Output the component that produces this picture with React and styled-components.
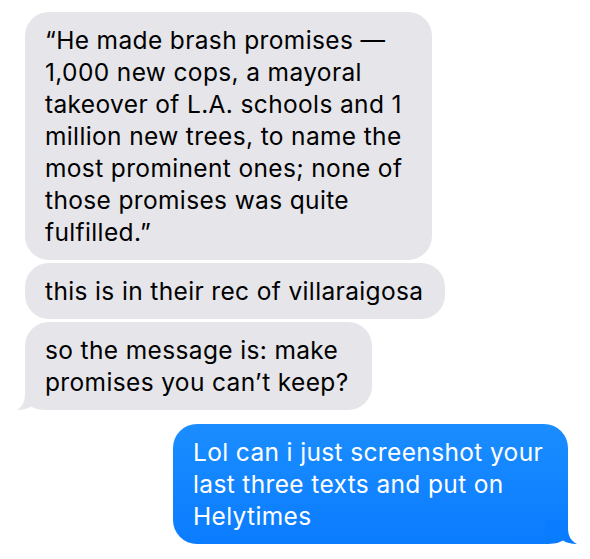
import React from "react";
import styled, { createGlobalStyle } from "styled-components";

const Global = createGlobalStyle`
  html, body { margin: 0; padding: 0; background: #ffffff; }
  body { font-family: Inter, "Noto Sans", sans-serif; -webkit-font-smoothing: antialiased; }
`;

const Thread = styled.div`
  width: 590px;
  height: 559px;
  box-sizing: border-box;
  padding: 12px 0 0 25px;
  display: flex;
  flex-direction: column;
  background: #fff;
  overflow: hidden;
`;

const Group = styled.div`
  display: flex;
  flex-direction: column;
  align-items: ${(p) => (p.$mine ? "flex-end" : "flex-start")};
  gap: 3px;
  margin-top: ${(p) => p.$top || 0}px;
  padding-right: ${(p) => (p.$mine ? 22 : 0)}px;
`;

const Bubble = styled.div`
  position: relative;
  z-index: 0;
  box-sizing: border-box;
  width: ${(p) => p.$w}px;
  padding: 12px 20px;
  border-radius: 24px;
  font-size: 24.5px;
  line-height: 32px;
  letter-spacing: 0.36px;
  white-space: nowrap;
  color: ${(p) => (p.$mine ? "#ffffff" : "#000000")};
  background: ${(p) =>
    p.$mine ? "linear-gradient(180deg, #1b8dff 0%, #0a7cff 100%)" : "#e5e5ea"};
`;

const Tail = styled.svg`
  position: absolute;
  z-index: -1;
  bottom: 0;
  ${(p) => (p.$mine ? "right: -9px;" : "left: -8px;")}
  width: 32px;
  height: 24px;
  overflow: visible;
`;

const GrayTail = () => (
  <Tail viewBox="0 0 32 24">
    <path
      d="M8 0 L8 8 C8 16 5 21 0 24 C6 24 11 22.5 14 20.5 C18 23 23 24 32 24 L32 0 Z"
      fill="#e5e5ea"
    />
  </Tail>
);

const BlueTail = () => (
  <Tail $mine viewBox="0 0 32 24">
    <path
      d="M23 0 L23 8 C23 16 26 21 32 24 C26 24 21 22.5 18 20.5 C14 23 9 24 0 24 L0 0 Z"
      fill="#0a7cff"
    />
  </Tail>
);

export default function App() {
  return (
    <>
      <Global />
      <Thread>
        <Group>
          <Bubble $w={407}>
            “He made brash promises —<br />
            1,000 new cops, a mayoral<br />
            takeover of L.A. schools and 1<br />
            million new trees, to name the<br />
            most prominent ones; none of<br />
            those promises was quite<br />
            fulfilled.”
          </Bubble>
          <Bubble $w={420}>this is in their rec of villaraigosa</Bubble>
          <Bubble $w={347}>
            so the message is: make<br />
            promises you can’t keep?
            <GrayTail />
          </Bubble>
        </Group>
        <Group $mine $top={14}>
          <Bubble $mine $w={395}>
            Lol can i just screenshot your<br />
            last three texts and put on<br />
            Helytimes
            <BlueTail />
          </Bubble>
        </Group>
      </Thread>
    </>
  );
}
